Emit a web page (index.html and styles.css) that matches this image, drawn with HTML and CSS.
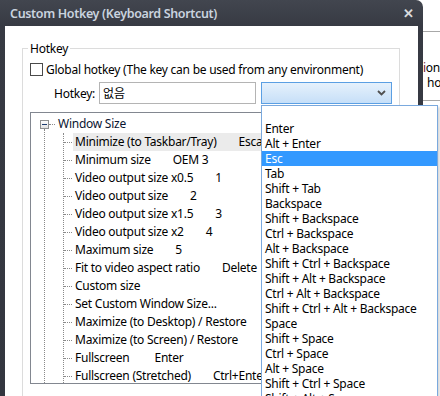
FILE: index.html
```html
<!DOCTYPE html>
<html>
<head>
<meta charset="utf-8">
<link rel="stylesheet" href="styles.css">
</head>
<body>
<div class="screen">
  <div class="window">
    <div class="titlebar">
      <span class="title">Custom Hotkey (Keyboard Shortcut)</span>
      <span class="close">✕</span>
    </div>
    <div class="client">
      <fieldset class="group">
        <legend>Hotkey</legend>
        <div class="check-row"><span class="checkbox"></span><span>Global hotkey (The key can be used from any environment)</span></div>
        <div class="hotkey-row">
          <span class="hk-label">Hotkey:</span>
          <div class="textbox">없음</div>
          <div class="combo">
            <svg class="chev" width="9" height="6" viewBox="0 0 9 6"><path d="M1 1 L4.5 4.5 L8 1" fill="none" stroke="#505050" stroke-width="1.8"/></svg>
          </div>
        </div>
        <div class="tree">
          <div class="root-row">
            <span class="expander"><span class="minus"></span></span>
            <span class="hdots short"></span>
            <span class="node-label">Window Size</span>
          </div>
          <div class="branch">
            <div class="children">
              <div class="row hover"><span class="hdots"></span><span class="node-label">Minimize (to Taskbar/Tray)<span class="key">Escape</span></span></div>
              <div class="row"><span class="hdots"></span><span class="node-label">Minimum size<span class="key">OEM 3</span></span></div>
              <div class="row"><span class="hdots"></span><span class="node-label">Video output size x0.5<span class="key">1</span></span></div>
              <div class="row"><span class="hdots"></span><span class="node-label">Video output size<span class="key">2</span></span></div>
              <div class="row"><span class="hdots"></span><span class="node-label">Video output size x1.5<span class="key">3</span></span></div>
              <div class="row"><span class="hdots"></span><span class="node-label">Video output size x2<span class="key">4</span></span></div>
              <div class="row"><span class="hdots"></span><span class="node-label">Maximum size<span class="key">5</span></span></div>
              <div class="row"><span class="hdots"></span><span class="node-label">Fit to video aspect ratio<span class="key">Delete</span></span></div>
              <div class="row"><span class="hdots"></span><span class="node-label">Custom size</span></div>
              <div class="row"><span class="hdots"></span><span class="node-label">Set Custom Window Size...</span></div>
              <div class="row"><span class="hdots"></span><span class="node-label">Maximize (to Desktop) / Restore</span></div>
              <div class="row"><span class="hdots"></span><span class="node-label">Maximize (to Screen) / Restore</span></div>
              <div class="row"><span class="hdots"></span><span class="node-label">Fullscreen<span class="key wide">Enter</span></span></div>
              <div class="row"><span class="hdots"></span><span class="node-label">Fullscreen (Stretched)<span class="key">Ctrl+Enter</span></span></div>
            </div>
          </div>
        </div>
      </fieldset>
    </div>
  </div>
  <div class="behind">
    <div class="behind-line"></div>
    <div class="behind-text"><span class="maroon">i</span>on</div>
    <div class="behind-text indent">ho</div>
    <div class="behind-line"></div>
  </div>
</div>
<div class="droplist">
  <div class="item"></div>
  <div class="item">Enter</div>
  <div class="item">Alt + Enter</div>
  <div class="item selected">Esc</div>
  <div class="item">Tab</div>
  <div class="item">Shift + Tab</div>
  <div class="item">Backspace</div>
  <div class="item">Shift + Backspace</div>
  <div class="item">Ctrl + Backspace</div>
  <div class="item">Alt + Backspace</div>
  <div class="item">Shift + Ctrl + Backspace</div>
  <div class="item">Shift + Alt + Backspace</div>
  <div class="item">Ctrl + Alt + Backspace</div>
  <div class="item">Shift + Ctrl + Alt + Backspace</div>
  <div class="item">Space</div>
  <div class="item">Shift + Space</div>
  <div class="item">Ctrl + Space</div>
  <div class="item">Alt + Space</div>
  <div class="item">Shift + Ctrl + Space</div>
  <div class="item">Shift + Alt + Space</div>
</div>
</body>
</html>
```

FILE: styles.css
```css
* { box-sizing: border-box; }
html, body {
  margin: 0;
  padding: 0;
  width: 440px;
  height: 396px;
  overflow: hidden;
  background: #ffffff;
  font-family: "Noto Sans", "Noto Sans CJK KR", sans-serif;
  font-size: 12px;
  letter-spacing: -0.25px;
  color: #000;
}
.screen {
  display: flex;
  width: 440px;
  height: 396px;
}
.window {
  width: 423px;
  height: 396px;
  flex: none;
  background: linear-gradient(#42464f, #373a43 26px, #33363f);
  border-radius: 0 7px 0 0;
  display: flex;
  flex-direction: column;
  padding: 0 5px 0 5px;
}
.titlebar {
  height: 26px;
  flex: none;
  display: flex;
  align-items: center;
  justify-content: space-between;
  padding: 0 4px 0 5px;
}
.title {
  color: #c9d3df;
  font-size: 12.5px;
  font-weight: 600;
  letter-spacing: -0.35px;
}
.close {
  color: #d8dadd;
  font-size: 13px;
  font-weight: bold;
}
.client {
  flex: 1;
  background: #fff;
  padding: 15px 18px 0 17px;
  overflow: hidden;
}
.group {
  margin: 0;
  border: 1px solid #dcdcdc;
  padding: 0 7px 0 7px;
  height: 400px;
}
.group legend {
  padding: 0 2px;
  margin-left: -2px;
  line-height: 15px;
  height: 15px;
}
.check-row {
  display: flex;
  align-items: center;
  height: 16px;
  margin-top: 5px;
  gap: 3px;
}
.checkbox {
  width: 13px;
  height: 13px;
  border: 1px solid #4a4a4a;
  background: #fff;
  flex: none;
}
.hotkey-row {
  display: flex;
  align-items: center;
  height: 22px;
  margin-top: 5px;
}
.hk-label {
  margin-left: 24px;
  width: 45px;
}
.textbox {
  width: 157px;
  height: 22px;
  border: 1px solid #b4b4b4;
  padding-left: 3px;
  line-height: 20px;
  font-family: "Noto Sans CJK KR", sans-serif;
  letter-spacing: 0;
}
.combo {
  margin-left: 5px;
  width: 131px;
  height: 22px;
  border: 1px solid #5b9fe3;
  background: linear-gradient(#e6f1fc, #c6dff8);
  display: flex;
  align-items: center;
  justify-content: flex-end;
  padding-right: 5px;
}
.tree {
  margin-top: 8px;
  height: 272px;
  border: 1px solid #828790;
  padding: 2px 0 0 9px;
  overflow: hidden;
}
.root-row {
  display: flex;
  align-items: center;
  height: 18px;
}
.expander {
  width: 9px;
  height: 9px;
  border: 1px solid #8e8f8f;
  background: linear-gradient(#fdfdfd, #e2e2e2);
  display: flex;
  align-items: center;
  justify-content: center;
  flex: none;
}
.minus {
  width: 5px;
  height: 1px;
  background: #1c3c6e;
}
.hdots {
  width: 8px;
  height: 1px;
  border-top: 1px dotted #8a8a8a;
  flex: none;
}
.hdots.short {
  width: 6px;
}
.node-label {
  padding: 0 2px;
  white-space: pre;
  line-height: 18px;
}
.root-row .node-label {
  color: #0a1430;
  margin-left: 1px;
}
.branch {
  margin-left: 4px;
  margin-top: -4px;
  padding-top: 4px;
  border-left: 1px dotted #8a8a8a;
  padding-left: 18px;
}
.children {
  border-left: 1px dotted #8a8a8a;
}
.row {
  display: flex;
  align-items: center;
  height: 18px;
}
.row .node-label {
  margin-left: 1px;
}
.row.hover .node-label {
  background: #ebebeb;
  flex: 1;
}
.key {
  margin-left: 22px;
}
.key.wide {
  margin-left: 25px;
}
.behind {
  flex: 1;
  background: #fff;
  padding-top: 31px;
  overflow: hidden;
  white-space: nowrap;
}
.behind-line {
  height: 1px;
  background: #a8a8a8;
}
.behind-text {
  line-height: 15px;
}
.behind-text:nth-child(2) {
  margin-top: 28px;
}
.behind-text.indent {
  margin-left: 4px;
  margin-bottom: 10px;
}
.maroon { color: #6a1030; }
.droplist {
  position: absolute;
  left: 261px;
  top: 105px;
  width: 177px;
  height: 310px;
  border: 1px solid #7aa9de;
  background: #fff;
  box-shadow: 2px 2px 2px rgba(0,0,0,0.15);
}
.item {
  height: 15px;
  line-height: 15px;
  padding-left: 3px;
  white-space: nowrap;
}
.item.selected {
  background: #3399ff;
  color: #fff;
}
```
